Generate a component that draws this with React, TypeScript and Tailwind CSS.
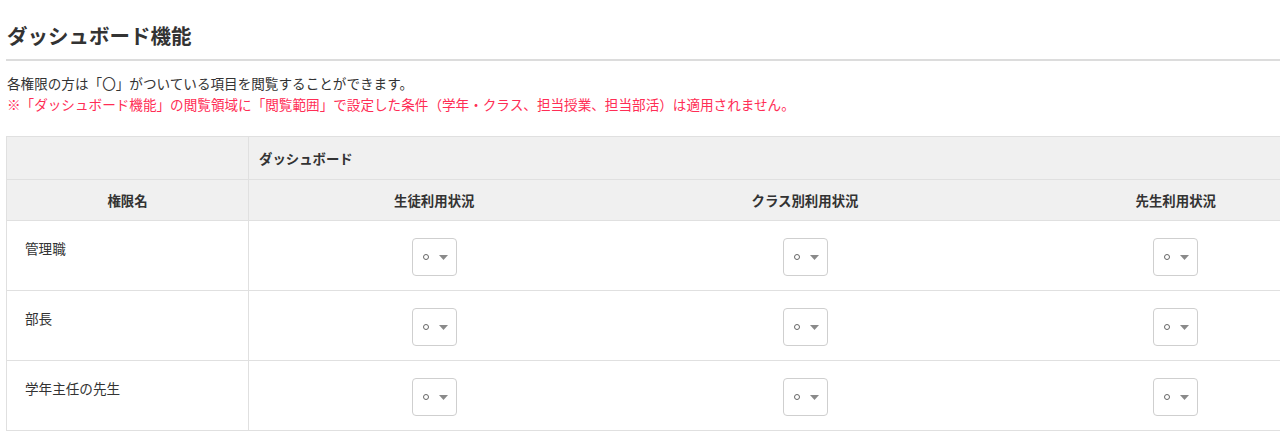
const roles = ["管理職", "部長", "学年主任の先生"];
const columns = ["生徒利用状況", "クラス別利用状況", "先生利用状況"];

const font = { fontFamily: '"Noto Sans CJK JP", "Noto Sans", sans-serif' };

const MarkSelect = () => (
	<div className="mx-auto flex h-[38px] w-[45px] items-center rounded-[4px] border border-[#cfcfcf] bg-white pl-[10px]">
		<span className="h-[6px] w-[6px] rounded-full border border-[#666]" />
		<svg width="9" height="5" viewBox="0 0 9 5" className="ml-[10px]">
			<path d="M0 0h9L4.5 5z" fill="#8a8a8a" />
		</svg>
	</div>
);

export default function App() {
	return (
		<div
			className="h-[432px] w-[1280px] overflow-hidden bg-white pl-[6px] text-[#333]"
			style={font}
		>
			<h1 className="pt-[20px] pl-px text-[20.5px] leading-[30px] font-bold text-[#333]">
				ダッシュボード機能
			</h1>
			<div className="mt-[9px] h-[2px] w-full bg-[#dcdcdc]" />

			<div className="mt-[12px] pl-px text-[13.6px] leading-[21px]">
				<p>各権限の方は「〇」がついている項目を閲覧することができます。</p>
				<p className="text-[#ff2d55]">
					※「ダッシュボード機能」の閲覧領域に「閲覧範囲」で設定した条件（学年・クラス、担当授業、担当部活）は適用されません。
				</p>
			</div>

			<table className="mt-[21px] w-[1356px] table-fixed border-collapse text-[13.4px]">
				<colgroup>
					<col className="w-[242px]" />
					<col />
					<col />
					<col />
				</colgroup>
				<thead className="bg-[#f0f0f0]">
					<tr className="h-[43px] border border-[#e0e0e0]">
						<th className="border-r border-[#e0e0e0]" />
						<th colSpan={3} className="px-[10px] text-left font-bold">
							ダッシュボード
						</th>
					</tr>
					<tr className="h-[41px] border border-[#e0e0e0]">
						<th className="border-r border-[#e0e0e0] font-bold">権限名</th>
						{columns.map((c) => (
							<th key={c} className="font-bold">
								{c}
							</th>
						))}
					</tr>
				</thead>
				<tbody>
					{roles.map((r) => (
						<tr key={r} className="h-[70px] border border-[#e0e0e0]">
							<td className="border-r border-[#e0e0e0] px-[18px] pt-[17px] align-top text-[13.6px] leading-[20px]">
								{r}
							</td>
							{columns.map((c) => (
								<td key={c} className="pt-[17px] pb-[13px] align-top">
									<MarkSelect />
								</td>
							))}
						</tr>
					))}
				</tbody>
			</table>
		</div>
	);
}
